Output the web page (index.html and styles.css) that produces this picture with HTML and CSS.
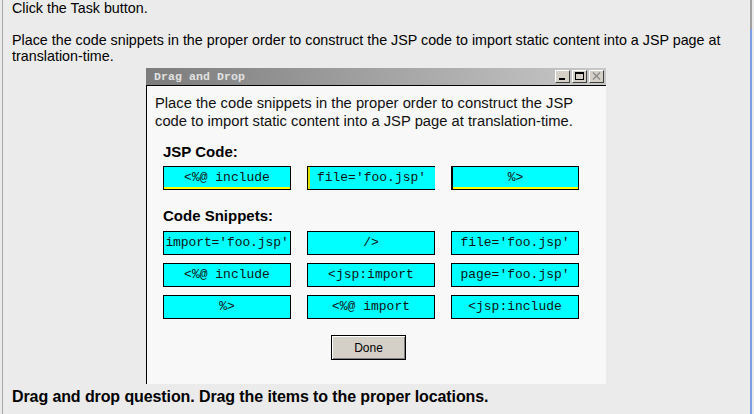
FILE: index.html
```html
<!DOCTYPE html>
<html>
<head>
<meta charset="utf-8">
<link rel="stylesheet" href="styles.css">
</head>
<body>
<div class="page">
  <p class="intro">Click the Task button.</p>
  <p class="intro question">Place the code snippets in the proper order to construct the JSP code to import static content into a JSP page at translation-time.</p>
  <div class="window">
    <div class="titlebar">
      <span class="title">Drag and Drop</span>
      <div class="ctrls">
        <span class="ctrl"><svg width="13" height="11" viewBox="0 0 13 11"><rect x="3" y="7" width="6" height="2" fill="#000"/></svg></span>
        <span class="ctrl"><svg width="13" height="11" viewBox="0 0 13 11"><rect x="2.5" y="1.5" width="8" height="7" fill="none" stroke="#000"/><rect x="2.5" y="1.5" width="8" height="1.5" fill="#000"/></svg></span>
        <span class="ctrl"><svg width="13" height="11" viewBox="0 0 13 11"><path d="M3 1.5 L10 8.5 M10 1.5 L3 8.5" stroke="#8a8a8a" stroke-width="1.4" fill="none"/></svg></span>
      </div>
    </div>
    <div class="wbody">
      <p class="prompt">Place the code snippets in the proper order to construct the JSP code to import static content into a JSP page at translation-time.</p>
      <h3 class="head">JSP Code:</h3>
      <div class="grid">
        <div class="box drop1">&lt;%@ include</div>
        <div class="box drop2">file='foo.jsp'</div>
        <div class="box drop3">%&gt;</div>
      </div>
      <h3 class="head head2">Code Snippets:</h3>
      <div class="grid snippets">
        <div class="box tight">import='foo.jsp'</div>
        <div class="box">/&gt;</div>
        <div class="box">file='foo.jsp'</div>
        <div class="box">&lt;%@ include</div>
        <div class="box">&lt;jsp:import</div>
        <div class="box">page='foo.jsp'</div>
        <div class="box">%&gt;</div>
        <div class="box">&lt;%@ import</div>
        <div class="box">&lt;jsp:include</div>
      </div>
      <div class="done-row"><button class="done">Done</button></div>
    </div>
  </div>
  <p class="footer">Drag and drop question. Drag the items to the proper locations.</p>
</div>
</body>
</html>
```

FILE: styles.css
```css
html, body {
  margin: 0;
  padding: 0;
  background: #ebebeb;
}
.page {
  margin-left: 2px;
  width: 750px;
  height: 414px;
  box-sizing: border-box;
  border-left: 1px solid #a8a8a8;
  padding-left: 9px;
  background: linear-gradient(to bottom, #a0a0a0 0, #a0a0a0 29px, #7c9ee4 29px) right top / 2px 100% no-repeat, #ebebeb;
  font-family: "Liberation Sans", Arial, sans-serif;
  color: #000;
  overflow: hidden;
}
.intro {
  margin: 0;
  font-size: 14.3px;
  line-height: 16px;
}
.question {
  margin-top: 16px;
  width: 730px;
}
.window {
  margin-top: 4px;
  margin-left: 134px;
  width: 460px;
  background: #f8f8f8;
  border-left: 1px solid #000;
  box-sizing: border-box;
}
.titlebar {
  height: 17px;
  border-bottom: 1px solid #000;
  background: linear-gradient(to right, #7c7c7c, #c8c8c8);
  display: flex;
  align-items: center;
  justify-content: space-between;
  padding-left: 8px;
  padding-right: 2px;
  margin-left: -1px;
}
.title {
  font-family: "Liberation Mono", monospace;
  font-weight: bold;
  font-size: 11.5px;
  color: #e2e2e2;
  letter-spacing: 0.1px;
}
.ctrls {
  display: flex;
  gap: 2px;
}
.ctrl {
  display: flex;
  width: 15px;
  height: 13px;
  box-sizing: border-box;
  background: #d4d0c8;
  border-top: 1px solid #fff;
  border-left: 1px solid #fff;
  border-right: 1px solid #404040;
  border-bottom: 1px solid #404040;
  align-items: center;
  justify-content: center;
}
.wbody {
  padding: 8px 0 24px 8px;
}
.prompt {
  margin: 0;
  font-size: 14.75px;
  line-height: 18px;
  color: #111;
}
.head {
  margin: 13px 0 0 8px;
  font-size: 15px;
  line-height: 18px;
  font-weight: bold;
}
.head2 {
  margin-top: 17px;
}
.grid {
  margin-top: 5px;
  margin-left: 8px;
  display: grid;
  grid-template-columns: repeat(3, 128px);
  column-gap: 16px;
  row-gap: 8px;
}
.snippets {
  margin-top: 6px;
}
.box {
  box-sizing: border-box;
  height: 24px;
  background: #00ffff;
  border: 1px solid #000;
  font-family: "Liberation Mono", monospace;
  font-size: 13px;
  line-height: 22px;
  text-align: center;
  white-space: nowrap;
  overflow: hidden;
  color: #111;
}
.tight {
  letter-spacing: -0.1px;
}
.drop1 {
  box-shadow: inset 0 -2px 0 #ffff00;
}
.drop2 {
  border-right: none;
  border-left: 1px solid #000;
  box-shadow: inset 2px 0 0 #e0e000;
}
.drop3 {
  border-left: 2px solid #000;
  box-shadow: inset 0 -2px 0 #ffff00;
}
.done-row {
  margin-top: 16px;
  padding-left: 176px;
}
.done {
  width: 75px;
  height: 25px;
  background: #d4d0c8;
  border: 1px solid #000;
  box-shadow: inset 1px 1px 0 #fff, inset -1px -1px 0 #808080;
  font-family: "Liberation Sans", Arial, sans-serif;
  font-size: 12px;
  color: #000;
  padding: 0;
  display: block;
}
.footer {
  margin: 4px 0 0 0;
  font-size: 16px;
  line-height: 18px;
  font-weight: bold;
  letter-spacing: -0.1px;
}
```
